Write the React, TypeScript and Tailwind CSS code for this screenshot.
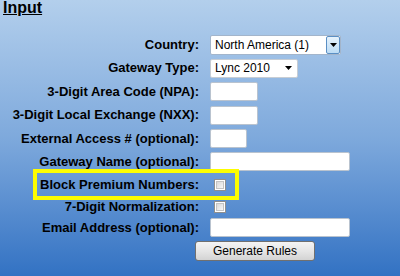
import React from "react";

type Row = {
  label: string;
  h: string;
  control: React.ReactNode;
  highlight?: boolean;
};

function TextBox({ w }: { w: string }) {
  return (
    <div
      className={`${w} h-[19px] bg-white border border-[#b9c3cf] rounded-[2px]`}
    />
  );
}

function CheckBox() {
  return (
    <div className="ml-[4px] w-[12px] h-[12px] border border-[#8e8f8f] bg-white p-[1px]">
      <div className="w-full h-full border border-[#c4c4c4] bg-gradient-to-br from-[#d9d9d9] to-[#f7f7f7]" />
    </div>
  );
}

function Triangle() {
  return (
    <svg width="7" height="4" viewBox="0 0 7 4">
      <path d="M0 0 H7 L3.5 4 Z" fill="#000" />
    </svg>
  );
}

export default function App() {
  const rows: Row[] = [
    {
      label: "Country:",
      h: "h-[23px]",
      control: (
        <div className="w-[131px] h-[20px] bg-white border border-[#a3b5cb] rounded-[2px] flex items-center">
          <span className="flex-1 pl-[4px] text-[12px] text-black">
            North America (1)
          </span>
          <div className="w-[14px] h-full border border-[#5b8fc4] rounded-[2px] bg-gradient-to-b from-[#e6f2fc] to-[#bcdcf5] flex items-center justify-center">
            <Triangle />
          </div>
        </div>
      ),
    },
    {
      label: "Gateway Type:",
      h: "h-[24px]",
      control: (
        <div className="w-[88px] h-[19px] bg-white border border-[#c7cdd4] rounded-[2px] flex items-center">
          <span className="flex-1 pl-[4px] text-[12px] text-black">
            Lync 2010
          </span>
          <div className="pr-[5px] flex items-center">
            <Triangle />
          </div>
        </div>
      ),
    },
    { label: "3-Digit Area Code (NPA):", h: "h-[23px]", control: <TextBox w="w-[48px]" /> },
    { label: "3-Digit Local Exchange (NXX):", h: "h-[24px]", control: <TextBox w="w-[48px]" /> },
    { label: "External Access # (optional):", h: "h-[23px]", control: <TextBox w="w-[37px]" /> },
    { label: "Gateway Name (optional):", h: "h-[23px]", control: <TextBox w="w-[140px]" /> },
    { label: "Block Premium Numbers:", h: "h-[23px]", control: <CheckBox />, highlight: true },
    { label: "7-Digit Normalization:", h: "h-[21px]", control: <CheckBox /> },
    { label: "Email Address (optional):", h: "h-[21px]", control: <TextBox w="w-[140px]" /> },
  ];

  return (
    <div
      className="w-[400px] h-[276px] overflow-hidden bg-gradient-to-b from-[#b3cfec] via-[#7ea9dc] to-[#3272c3]"
      style={{ fontFamily: '"Liberation Sans", Arial, sans-serif' }}
    >
      <div className="h-[33px] pl-[3px] pt-[0px]">
        <h1 className="text-[16px] leading-[16px] font-bold underline text-black">
          Input
        </h1>
      </div>
      <div className="flex flex-col">
        {rows.map((r) => (
          <div key={r.label} className={`relative flex items-center ${r.h}`}>
            <div className="w-[200px] pr-[1px] text-right text-[13px] font-bold text-black whitespace-nowrap">
              {r.label}
            </div>
            <div className="ml-[10px] flex items-center">{r.control}</div>
            {r.highlight && (
              <div className="pointer-events-none absolute left-[33px] top-[-4px] w-[206px] h-[31px] border-4 border-[#fdfd00]" />
            )}
          </div>
        ))}
        <div className="flex mt-[3px]">
          <div className="w-[200px]" />
          <button className="ml-[-5px] w-[120px] h-[20px] border border-[#707070] rounded-[3px] bg-gradient-to-b from-[#f4f4f4] via-[#e6e6e6] to-[#d3d3d3] text-[12px] text-black leading-none">
            Generate Rules
          </button>
        </div>
      </div>
    </div>
  );
}
